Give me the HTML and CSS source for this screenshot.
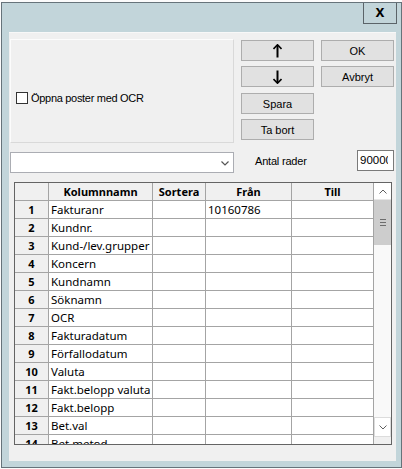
FILE: index.html
```html
<!DOCTYPE html>
<html>
<head>
<meta charset="utf-8">
<link rel="stylesheet" href="styles.css">
</head>
<body>
<div class="window">
  <div class="titlebar"><div class="close">x</div></div>
  <div class="client">
    <div class="top">
      <div class="panel">
        <div class="check"><span class="box"></span><span class="cl">Öppna poster med OCR</span></div>
      </div>
      <div class="btncol">
        <div class="btn"><svg width="9" height="14" viewBox="0 0 9 14"><path d="M4.5 1 V13.5" stroke="#000" stroke-width="2"/><path d="M0.5 5 L4.5 0.8 L8.5 5" fill="none" stroke="#000" stroke-width="1.6"/></svg></div>
        <div class="btn"><svg width="9" height="14" viewBox="0 0 9 14"><path d="M4.5 0.5 V13" stroke="#000" stroke-width="2"/><path d="M0.5 9 L4.5 13.2 L8.5 9" fill="none" stroke="#000" stroke-width="1.6"/></svg></div>
        <div class="btn gap6">Spara</div>
        <div class="btn">Ta bort</div>
      </div>
      <div class="btncol">
        <div class="btn">OK</div>
        <div class="btn">Avbryt</div>
      </div>
    </div>
    <div class="row2">
      <div class="combo"><svg width="8" height="5" viewBox="0 0 8 5"><path d="M0.5 0.5 L4 4 L7.5 0.5" fill="none" stroke="#555" stroke-width="1.2"/></svg></div>
      <span class="lbl">Antal rader</span>
      <div class="num"><span>90000</span></div>
    </div>
    <div class="grid">
      <div class="tbl">
        <div class="tr head"><div class="c n"></div><div class="c">Kolumnnamn</div><div class="c">Sortera</div><div class="c">Från</div><div class="c">Till</div></div>
        <div class="tr"><div class="c n">1</div><div class="c">Fakturanr</div><div class="c"></div><div class="c">10160786</div><div class="c"></div></div>
        <div class="tr"><div class="c n">2</div><div class="c">Kundnr.</div><div class="c"></div><div class="c"></div><div class="c"></div></div>
        <div class="tr"><div class="c n">3</div><div class="c">Kund-/lev.grupper</div><div class="c"></div><div class="c"></div><div class="c"></div></div>
        <div class="tr"><div class="c n">4</div><div class="c">Koncern</div><div class="c"></div><div class="c"></div><div class="c"></div></div>
        <div class="tr"><div class="c n">5</div><div class="c">Kundnamn</div><div class="c"></div><div class="c"></div><div class="c"></div></div>
        <div class="tr"><div class="c n">6</div><div class="c">Söknamn</div><div class="c"></div><div class="c"></div><div class="c"></div></div>
        <div class="tr"><div class="c n">7</div><div class="c">OCR</div><div class="c"></div><div class="c"></div><div class="c"></div></div>
        <div class="tr"><div class="c n">8</div><div class="c">Fakturadatum</div><div class="c"></div><div class="c"></div><div class="c"></div></div>
        <div class="tr"><div class="c n">9</div><div class="c">Förfallodatum</div><div class="c"></div><div class="c"></div><div class="c"></div></div>
        <div class="tr"><div class="c n">10</div><div class="c">Valuta</div><div class="c"></div><div class="c"></div><div class="c"></div></div>
        <div class="tr"><div class="c n">11</div><div class="c">Fakt.belopp valuta</div><div class="c"></div><div class="c"></div><div class="c"></div></div>
        <div class="tr"><div class="c n">12</div><div class="c">Fakt.belopp</div><div class="c"></div><div class="c"></div><div class="c"></div></div>
        <div class="tr"><div class="c n">13</div><div class="c">Bet.val</div><div class="c"></div><div class="c"></div><div class="c"></div></div>
        <div class="tr"><div class="c n">14</div><div class="c">Bet.metod</div><div class="c"></div><div class="c"></div><div class="c"></div></div>
      </div>
      <div class="sb">
        <div class="sb-up"><svg width="8" height="5" viewBox="0 0 8 5"><path d="M0.5 4.5 L4 1 L7.5 4.5" fill="none" stroke="#606060" stroke-width="1"/></svg></div>
        <div class="sb-thumb"><span class="grip"></span><span class="grip"></span><span class="grip"></span></div>
        <div class="sb-track"></div>
        <div class="sb-down"><svg width="8" height="5" viewBox="0 0 8 5"><path d="M0.5 0.5 L4 4 L7.5 0.5" fill="none" stroke="#606060" stroke-width="1"/></svg></div>
        <div class="sb-end"></div>
      </div>
    </div>
  </div>
</div>
</body>
</html>
```

FILE: styles.css
```css
html, body {
  margin: 0;
  padding: 0;
  background: #fbfbfb;
  font-family: "Liberation Sans", Arial, sans-serif;
  font-size: 11px;
  color: #000;
}

.window {
  margin: 2px 0 0 1px;
  width: 401px;
  height: 466px;
  box-sizing: border-box;
  border: 1px solid #66737a;
  background: #c2d5da;
  display: flex;
  flex-direction: column;
}

.titlebar {
  flex: none;
  height: 29px;
  display: flex;
  justify-content: flex-end;
  padding-right: 4px;
}

.close {
  width: 34px;
  height: 21px;
  box-sizing: border-box;
  border: 1px solid #5b6469;
  border-top: none;
  font-weight: bold;
  font-size: 16px;
  line-height: 17px;
  text-align: center;
}

.client {
  flex: 1;
  margin: 0 5px 6px 7px;
  background: #f0f0f0;
  border-top: 1px solid #f8f8f8;
  display: flex;
  flex-direction: column;
}

.top {
  display: flex;
  margin-top: 6px;
  height: 104px;
}

.panel {
  width: 224px;
  height: 104px;
  margin-left: 1px;
  box-sizing: border-box;
  border: 1px solid;
  border-color: #fcfcfc #d9d9d9 #d9d9d9 #fcfcfc;
  padding: 51px 0 0 5px;
}

.check {
  display: flex;
  align-items: center;
  gap: 3px;
  height: 14px;
}

.cl {
  letter-spacing: -0.3px;
}

.box {
  width: 12px;
  height: 12px;
  box-sizing: border-box;
  border: 1px solid #333;
  background: #fff;
}

.btncol {
  margin-left: 7px;
  width: 73px;
  padding-top: 1px;
  display: flex;
  flex-direction: column;
  gap: 5px;
}

.btn {
  height: 21px;
  box-sizing: border-box;
  border: 1px solid #adadad;
  background: #e1e1e1;
  display: flex;
  align-items: center;
  justify-content: center;
}

.gap6 {
  margin-top: 1px;
}

.row2 {
  display: flex;
  margin-top: 7px;
  height: 23px;
}

.combo {
  margin-left: 1px;
  width: 224px;
  height: 21px;
  align-self: flex-end;
  box-sizing: border-box;
  border: 1px solid #abadb3;
  background: #fff;
  display: flex;
  justify-content: flex-end;
  align-items: center;
  padding: 1px 4px 0 0;
}

.lbl {
  margin-left: 21px;
  line-height: 23px;
  letter-spacing: -0.2px;
}

.num {
  margin-left: auto;
  margin-right: 2px;
  width: 37px;
  height: 21px;
  align-self: flex-start;
  box-sizing: border-box;
  border: 1px solid #7a7a7a;
  background: #fff;
  padding: 3px 0 0 2px;
}

.num span {
  display: block;
  width: 28px;
  overflow: hidden;
  white-space: nowrap;
  font-size: 11.5px;
}

.grid {
  margin: 9px 4px 0 5px;
  height: 263px;
  box-sizing: border-box;
  border: 1px solid #646464;
  display: flex;
  background: #fff;
}

.tbl {
  width: 359px;
  overflow: hidden;
  font-family: "Noto Sans", "Open Sans", sans-serif;
  font-size: 11.5px;
}

.tr {
  display: grid;
  grid-template-columns: 34px 104px 53px 86px 82px;
  height: 18px;
  flex: none;
}

.c {
  box-sizing: border-box;
  border-right: 1px solid #a4a4a4;
  border-bottom: 1px solid #a4a4a4;
  padding-left: 2px;
  line-height: 17px;
  white-space: nowrap;
  overflow: hidden;
}

.head .c {
  background: #f0f0f0;
  font-weight: bold;
  font-size: 11px;
  text-align: center;
  padding-left: 0;
}

.c.n {
  background: #f0f0f0;
  font-weight: bold;
  font-size: 11px;
  text-align: center;
  padding-left: 0;
}

.sb {
  width: 17px;
  display: flex;
  flex-direction: column;
  background: #f0f0f0;
}

.sb-up {
  height: 17px;
  background: #fff;
  box-sizing: border-box;
  border-bottom: 1px solid #e6e6e6;
  display: flex;
  align-items: center;
  justify-content: center;
}

.sb-thumb {
  height: 45px;
  background: #cdcdcd;
  display: flex;
  flex-direction: column;
  align-items: center;
  justify-content: center;
  gap: 2px;
}

.grip {
  display: block;
  width: 6px;
  height: 1px;
  background: #6d6d6d;
}

.sb-track {
  flex: 1;
  background: #f9f9f9;
}

.sb-down {
  height: 20px;
  background: #fff;
  box-sizing: border-box;
  border: 1px solid #dcdcdc;
  display: flex;
  align-items: center;
  justify-content: center;
}

.sb-end {
  height: 7px;
  background: #f0f0f0;
}
```
